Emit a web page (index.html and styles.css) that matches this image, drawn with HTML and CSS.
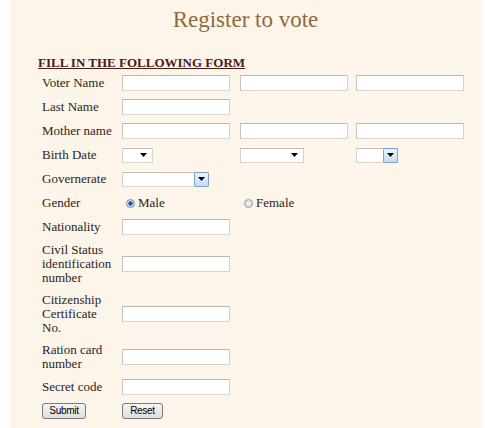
FILE: index.html
```html
<!DOCTYPE html>
<html>
<head>
<meta charset="utf-8">
<link rel="stylesheet" href="styles.css">
</head>
<body>
<div class="panel">
  <h1 class="title">Register to vote</h1>
  <form class="form">
    <h2 class="heading">FILL IN THE FOLLOWING FORM</h2>
    <div class="row">
      <span class="label">Voter Name</span>
      <input class="field" type="text">
      <input class="field" type="text">
      <input class="field" type="text">
    </div>
    <div class="row">
      <span class="label">Last Name</span>
      <input class="field" type="text">
    </div>
    <div class="row">
      <span class="label">Mother name</span>
      <input class="field" type="text">
      <input class="field" type="text">
      <input class="field" type="text">
    </div>
    <div class="row">
      <span class="label">Birth Date</span>
      <span class="select w30"><svg class="arrow" width="7" height="4" viewBox="0 0 7 4"><path d="M0 0H7L3.5 4Z" fill="#000"/></svg></span>
      <span class="select w64"><svg class="arrow" width="7" height="4" viewBox="0 0 7 4"><path d="M0 0H7L3.5 4Z" fill="#000"/></svg></span>
      <span class="select w42"><span class="btn-arrow"><svg width="7" height="4" viewBox="0 0 7 4"><path d="M0 0H7L3.5 4Z" fill="#000"/></svg></span></span>
    </div>
    <div class="row">
      <span class="label">Governerate</span>
      <span class="select w87"><span class="btn-arrow"><svg width="7" height="4" viewBox="0 0 7 4"><path d="M0 0H7L3.5 4Z" fill="#000"/></svg></span></span>
    </div>
    <div class="row">
      <span class="label">Gender</span>
      <span class="choice"><span class="radio checked"></span>Male</span>
      <span class="choice"><span class="radio"></span>Female</span>
    </div>
    <div class="row">
      <span class="label">Nationality</span>
      <input class="field" type="text">
    </div>
    <div class="row">
      <span class="label">Civil Status<br>identification<br>number</span>
      <input class="field" type="text">
    </div>
    <div class="row">
      <span class="label">Citizenship<br>Certificate<br>No.</span>
      <input class="field" type="text">
    </div>
    <div class="row">
      <span class="label">Ration card<br>number</span>
      <input class="field" type="text">
    </div>
    <div class="row">
      <span class="label">Secret code</span>
      <input class="field" type="text">
    </div>
    <div class="row">
      <span class="label-cell"><button class="button" type="button">Submit</button></span>
      <span><button class="button" type="button">Reset</button></span>
    </div>
  </form>
</div>
</body>
</html>
```

FILE: styles.css
```css
html, body {
  margin: 0;
  padding: 0;
  background: #ffffff;
}

.panel {
  margin-left: 10px;
  width: 471px;
  min-height: 428px;
  background: #fdf5ea;
  font-family: "Liberation Serif", "Times New Roman", serif;
  color: #2a2420;
}

.title {
  margin: 0;
  padding-top: 6px;
  height: 55px;
  box-sizing: border-box;
  line-height: 28px;
  font-size: 23px;
  font-weight: normal;
  text-align: center;
  color: #8d6b3f;
}

.form {
  margin: 0;
  padding-left: 28px;
}

.heading {
  margin: 0;
  font-size: 13px;
  line-height: 16px;
  font-weight: bold;
  color: #4b1c14;
  text-decoration: underline;
}

.row {
  display: grid;
  grid-template-columns: 80px 118px 116px 109px;
  align-items: center;
  padding: 4px 0 4px 4px;
  min-height: 16px;
}

.label {
  font-size: 13px;
  line-height: 14px;
}

.field {
  display: block;
  width: 108px;
  height: 16px;
  box-sizing: border-box;
  margin: 0;
  padding: 0 2px;
  background: #ffffff;
  border: 1px solid #d6d1ca;
  border-top-color: #bdb7af;
  border-left-color: #c9c3bb;
  font-size: 12px;
}

.select {
  display: flex;
  align-items: center;
  justify-content: flex-end;
  height: 15px;
  box-sizing: border-box;
  background: #ffffff;
  border: 1px solid #d6d1ca;
  border-top-color: #c2bcb4;
}

.w30 { width: 31px; }
.w64 { width: 64px; }
.w42 { width: 42px; }
.w87 { width: 87px; }

.arrow {
  margin-right: 5px;
}

.btn-arrow {
  display: flex;
  align-items: center;
  justify-content: center;
  width: 15px;
  height: 15px;
  box-sizing: border-box;
  margin: -1px -1px -1px 0;
  border: 1px solid #7da2ce;
  border-radius: 2px;
  background: linear-gradient(#eaf3fc, #c6dcf3);
}

.choice {
  display: flex;
  align-items: center;
  font-size: 13px;
  line-height: 14px;
}

.radio {
  width: 9px;
  height: 9px;
  box-sizing: border-box;
  margin: 0 3px 0 4px;
  border: 1px solid #9a9a9a;
  border-radius: 50%;
  background: radial-gradient(circle, #f4f4f4, #d4d4d4);
}

.radio.checked {
  border-color: #7c8ea6;
  background: radial-gradient(circle, #21467c 0, #3a6aa8 2px, #dbe6f2 2.5px, #c5d3e3 4px);
}

.button {
  display: block;
  height: 16px;
  box-sizing: border-box;
  margin: 0;
  padding: 0 6px;
  border: 1px solid #7a7a7a;
  border-radius: 3px;
  background: linear-gradient(#f6f6f6, #dedede);
  font-family: "Liberation Sans", Arial, sans-serif;
  font-size: 10px;
  letter-spacing: -0.3px;
  line-height: 14px;
  color: #000000;
}

.label-cell .button {
  width: 44px;
}

.row span:not(.label-cell) > .button {
  width: 41px;
}
```
